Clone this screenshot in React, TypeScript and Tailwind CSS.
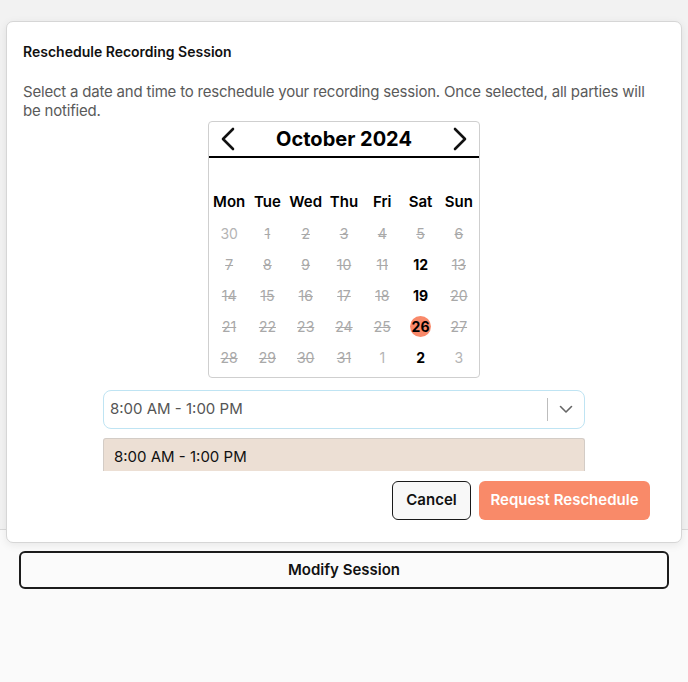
import React from 'react'

type Day = { n: number; kind: 'muted' | 'off' | 'open' | 'selected' }

const weeks: Day[][] = [
    [{ n: 30, kind: 'muted' }, { n: 1, kind: 'off' }, { n: 2, kind: 'off' }, { n: 3, kind: 'off' }, { n: 4, kind: 'off' }, { n: 5, kind: 'off' }, { n: 6, kind: 'off' }],
    [{ n: 7, kind: 'off' }, { n: 8, kind: 'off' }, { n: 9, kind: 'off' }, { n: 10, kind: 'off' }, { n: 11, kind: 'off' }, { n: 12, kind: 'open' }, { n: 13, kind: 'off' }],
    [{ n: 14, kind: 'off' }, { n: 15, kind: 'off' }, { n: 16, kind: 'off' }, { n: 17, kind: 'off' }, { n: 18, kind: 'off' }, { n: 19, kind: 'open' }, { n: 20, kind: 'off' }],
    [{ n: 21, kind: 'off' }, { n: 22, kind: 'off' }, { n: 23, kind: 'off' }, { n: 24, kind: 'off' }, { n: 25, kind: 'off' }, { n: 26, kind: 'selected' }, { n: 27, kind: 'off' }],
    [{ n: 28, kind: 'off' }, { n: 29, kind: 'off' }, { n: 30, kind: 'off' }, { n: 31, kind: 'off' }, { n: 1, kind: 'muted' }, { n: 2, kind: 'open' }, { n: 3, kind: 'muted' }],
]

const dayNames = ['Mon', 'Tue', 'Wed', 'Thu', 'Fri', 'Sat', 'Sun']

function DayCell({ day }: { day: Day }) {
    if (day.kind === 'selected') {
        return (
            <div className="flex h-[31px] items-center justify-center">
                <span className="flex h-[21px] w-[21px] items-center justify-center rounded-full bg-[#f9896a] text-[14px] font-bold text-black">
                    {day.n}
                </span>
            </div>
        )
    }
    const tone =
        day.kind === 'open'
            ? 'font-bold text-black'
            : day.kind === 'off'
              ? 'text-[#a9a9a9] line-through'
              : 'text-[#b4b4b4]'
    return <div className={`flex h-[31px] items-center justify-center text-[14px] ${tone}`}>{day.n}</div>
}

function Calendar() {
    return (
        <div className="mx-auto mt-[1px] w-[272px] rounded-[4px] border border-[#cfcfcf] bg-white">
            {/* Month header */}
            <div className="flex h-[36px] items-center justify-between border-b-2 border-black px-[11px]">
                <svg width="16" height="24" viewBox="0 0 16 24" fill="none">
                    <path d="M13 2 L3 12 L13 22" stroke="#111" strokeWidth="2.6" strokeLinecap="round" strokeLinejoin="round" />
                </svg>
                <span className="text-[20px] font-bold text-black">October 2024</span>
                <svg width="16" height="24" viewBox="0 0 16 24" fill="none">
                    <path d="M3 2 L13 12 L3 22" stroke="#111" strokeWidth="2.6" strokeLinecap="round" strokeLinejoin="round" />
                </svg>
            </div>
            <div className="px-[1px] pt-[33px] pb-[4px]">
                <div className="grid grid-cols-7">
                    {dayNames.map(d => (
                        <div key={d} className="flex h-[22px] items-center justify-center text-[15px] font-semibold text-black">
                            {d}
                        </div>
                    ))}
                </div>
                <div className="mt-[5px] grid grid-cols-7">
                    {weeks.flat().map((day, i) => (
                        <DayCell key={i} day={day} />
                    ))}
                </div>
            </div>
        </div>
    )
}

export default function App() {
    return (
        <div className="relative h-[682px] w-[688px] overflow-hidden bg-[#fafafa] font-['Inter',sans-serif]">
            {/* Underlying page */}
            <div className="h-[530px] border-b border-[#d9d9d9] bg-[#f2f2f2]" />
            <div className="px-[19px] pt-[21px]">
                <button className="flex h-[38px] w-full items-center justify-center rounded-[6px] border-2 border-[#1c1c1c] bg-[#fbfbfb] text-[15px] font-semibold text-[#111]">
                    Modify Session
                </button>
            </div>

            {/* Dialog */}
            <div className="absolute left-[6px] top-[21px] h-[522px] w-[676px] rounded-[7px] border border-[#d6d6d6] bg-white shadow-[0_2px_8px_rgba(0,0,0,0.08)]">
                <div className="px-[16px] pt-[20px]">
                    <h2 className="text-[14px] font-semibold leading-[20px] text-[#111]">Reschedule Recording Session</h2>
                    <p className="mt-[20px] w-[634px] text-[15px] leading-[19px] tracking-[-0.2px] text-[#5a5a5a]">
                        Select a date and time to reschedule your recording session. Once selected, all parties will be notified.
                    </p>
                </div>

                <Calendar />

                {/* Time select */}
                <div className="mx-[96px] mt-[12px]">
                    <div className="flex h-[39px] items-center rounded-[8px] border border-[#bfe4f3] bg-white">
                        <span className="flex-1 pl-[6px] text-[15px] text-[#555]">8:00 AM - 1:00 PM</span>
                        <span className="h-[23px] w-px bg-[#bdbdbd]" />
                        <span className="flex w-[36px] items-center justify-center">
                            <svg width="14" height="9" viewBox="0 0 14 9" fill="none">
                                <path d="M1.5 1.5 L7 7 L12.5 1.5" stroke="#666" strokeWidth="1.6" strokeLinecap="round" strokeLinejoin="round" />
                            </svg>
                        </span>
                    </div>
                    <div className="mt-[9px] h-[33px] overflow-hidden rounded-t-[3px] border-x border-t border-[#d3ccc6] bg-[#ecdfd4]">
                        <div className="flex h-[36px] items-center pl-[10px] text-[15px] text-[#111]">8:00 AM - 1:00 PM</div>
                    </div>
                </div>

                {/* Actions */}
                <div className="mt-[10px] flex justify-end gap-[8px] pr-[31px]">
                    <button className="h-[39px] w-[79px] rounded-[6px] border-[1.5px] border-[#1a1a1a] bg-[#f8f8f8] text-[15px] font-semibold text-[#111]">
                        Cancel
                    </button>
                    <button className="h-[39px] w-[171px] rounded-[6px] bg-[#f98a69] text-[15px] font-semibold text-white">
                        Request Reschedule
                    </button>
                </div>
            </div>
        </div>
    )
}
